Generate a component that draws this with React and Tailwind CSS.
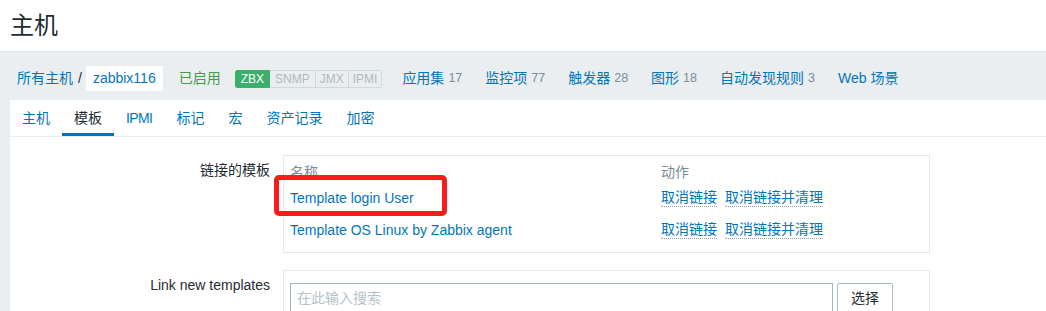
export default function App() {
  const navItems = [
    ["应用集", "17"],
    ["监控项", "77"],
    ["触发器", "28"],
    ["图形", "18"],
    ["自动发现规则", "3"],
    ["Web 场景", ""],
  ];
  const tabs = ["主机", "模板", "IPMI", "标记", "宏", "资产记录", "加密"];
  return (
    <div className="w-[1046px] h-[311px] overflow-hidden bg-[#ebeef0] font-['Liberation_Sans','Noto_Sans_CJK_SC',sans-serif] text-[14px] text-[#1f2c33]">
      <header className="h-[52px] bg-white border-b border-[#dfe4e7] flex items-center px-[10px]">
        <h1 className="text-[24px] leading-none font-normal">主机</h1>
      </header>

      <nav className="pt-[14px] pb-[9px] pl-[17px] flex items-center h-[48px]">
        <a className="text-[#0275b8]">所有主机</a>
        <span className="ml-[5px] mr-[4px] text-[#1f2c33]">/</span>
        <span className="h-[25px] bg-white px-[7px] flex items-center text-[#0275b8]">zabbix116</span>
        <span className="ml-[16px] text-[#429e47]">已启用</span>
        <div className="ml-[14px] flex h-[18px] text-[12px] leading-none rounded-[2px] overflow-hidden">
          <span className="bg-[#3ab06a] text-white px-[5px] flex items-center border border-[#3ab06a] rounded-l-[2px]">ZBX</span>
          <span className="bg-[#ebeef0] text-[#acbbc2] px-[5px] flex items-center border border-l-0 border-[#d0d8dc]">SNMP</span>
          <span className="bg-[#ebeef0] text-[#acbbc2] px-[4px] flex items-center border border-l-0 border-[#d0d8dc]">JMX</span>
          <span className="bg-[#ebeef0] text-[#acbbc2] px-[4px] flex items-center border border-l-0 border-[#d0d8dc] rounded-r-[2px]">IPMI</span>
        </div>
        <div className="ml-[20px] flex items-center gap-[23px]">
          {navItems.map(([l, c]) => (
            <span key={l} className="flex items-center">
              <a className="text-[#0275b8]">{l}</a>
              {c && <span className="ml-[4px] text-[12.5px] text-[#768d99]">{c}</span>}
            </span>
          ))}
        </div>
      </nav>

      <div className="ml-[10px] bg-white h-[211px]">
        <div className="flex border-b border-[#ebeef0] h-[37px]">
          {tabs.map((t, i) => (
            <div
              key={t}
              className={
                "px-[12px] h-[36px] flex items-center pt-[3px] border-b-[3px] " +
                (t === "IPMI" ? "tracking-[-0.6px] " : "") +
                (i === 1 ? "border-[#0275b8] text-[#1f2c33]" : "border-transparent text-[#0275b8]")
              }
            >
              {t}
            </div>
          ))}
        </div>

        <div className="pt-[18px] flex flex-col gap-[17px]">
          <div className="flex">
            <div className="w-[260px] text-right pt-[7px] leading-[16px]">链接的模板</div>
            <div className="ml-[13px] w-[647px] border border-[#e6e9eb] px-[6px] pt-[4px] pb-[4px] relative">
              <div className="flex h-[24px] items-center text-[#768d99]">
                <span className="w-[371px]">名称</span>
                <span>动作</span>
              </div>
              <div className="flex h-[28px] items-center">
                <a className="w-[371px] text-[#0275b8]">Template login User</a>
                <span className="flex gap-[8px]">
                  <a className="text-[#0275b8] border-b border-dotted border-[#8aa4b8] leading-[17px]">取消链接</a>
                  <a className="text-[#0275b8] border-b border-dotted border-[#8aa4b8] leading-[17px]">取消链接并清理</a>
                </span>
              </div>
              <div className="flex h-[36px] items-center">
                <a className="w-[371px] text-[#0275b8]">Template OS Linux by Zabbix agent</a>
                <span className="flex gap-[8px]">
                  <a className="text-[#0275b8] border-b border-dotted border-[#8aa4b8] leading-[17px]">取消链接</a>
                  <a className="text-[#0275b8] border-b border-dotted border-[#8aa4b8] leading-[17px]">取消链接并清理</a>
                </span>
              </div>
              <div className="absolute left-[-10px] top-[19px] w-[173px] h-[41px] border-[5px] border-[#ff1a1a] rounded-[5px]" />
            </div>
          </div>

          <div className="flex">
            <div className="w-[260px] text-right pt-[7px] leading-[16px]">Link new templates</div>
            <div className="ml-[13px] w-[647px] h-[60px] border border-[#e6e9eb] pl-[6px] pt-[12px] flex items-start">
              <div className="w-[543px] h-[30px] border border-[#a4b6c0] flex items-center pl-[6px] text-[#b4c2c8]">在此输入搜索</div>
              <button className="ml-[4px] w-[56px] h-[30px] border border-[#acbbc2] rounded-[2px] bg-white text-[#1f2c33] flex items-center justify-center">选择</button>
            </div>
          </div>
        </div>
      </div>
    </div>
  );
}
